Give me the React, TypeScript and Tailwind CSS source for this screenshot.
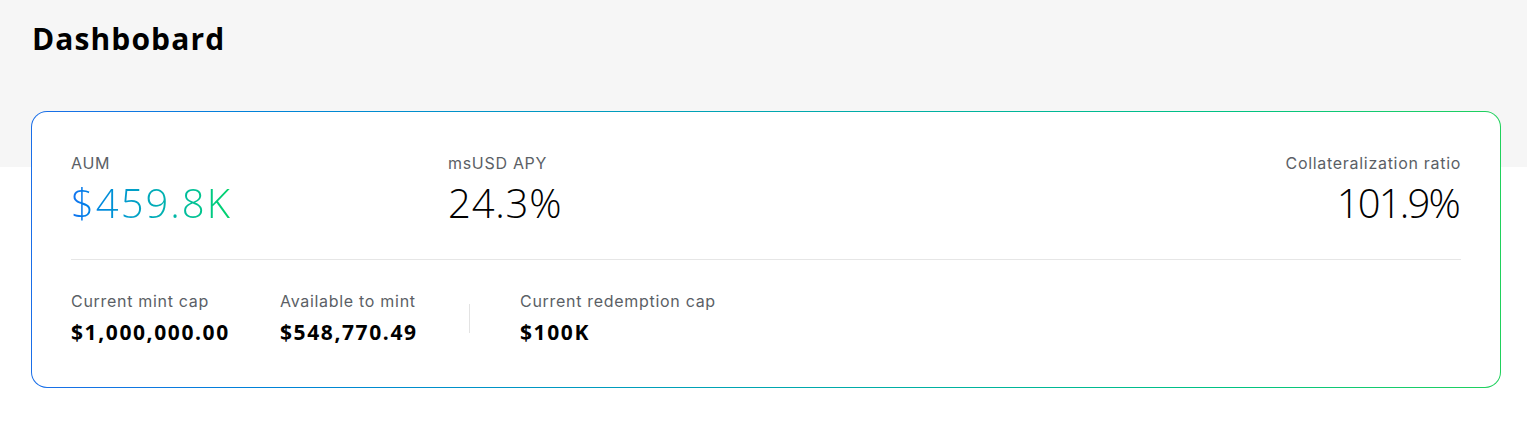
import React from "react";

const num = { fontFamily: '"Open Sans", "Liberation Sans", sans-serif' };
const lab = { fontFamily: 'Inter, "Liberation Sans", sans-serif' };

function Label({ children }: { children: React.ReactNode }) {
  return (
    <div style={lab} className="text-[16px] leading-[20px] tracking-[0.7px] text-[#5b5f66]">
      {children}
    </div>
  );
}

function Small({ children }: { children: React.ReactNode }) {
  return (
    <div style={num} className="mt-[8px] text-[21px] leading-[26px] font-bold tracking-[1.6px] text-black">
      {children}
    </div>
  );
}

export default function App() {
  return (
    <div className="min-h-[432px] w-full bg-[linear-gradient(to_bottom,#f6f6f6_0px,#f6f6f6_167px,#ffffff_167px)]">
      <div className="pl-[32px] pt-[21px] h-[111px]">
        <h1 style={num} className="text-[30px] leading-[36px] font-bold text-black tracking-[1.1px]">
          Dashbobard
        </h1>
      </div>
      <div className="ml-[31px] w-[1470px] rounded-[16px] p-px bg-gradient-to-r from-[#1a6ee8] to-[#20d15c]">
        <div className="rounded-[15px] bg-white px-[39px] pt-[41px] pb-[42px]">
          <div className="flex items-start">
            <div className="w-[377px]">
              <Label>AUM</Label>
              <div
                style={num}
                className="mt-[4px] text-[40px] leading-[52px] font-light tracking-[2px] bg-gradient-to-r from-[#1472f2] to-[#0bd468] bg-clip-text text-transparent w-fit"
              >
                $459.8K
              </div>
            </div>
            <div className="flex-1">
              <Label>msUSD APY</Label>
              <div style={num} className="mt-[4px] text-[40px] leading-[52px] font-light tracking-[0.8px] text-black">
                24.3%
              </div>
            </div>
            <div className="text-right">
              <Label>Collateralization ratio</Label>
              <div style={num} className="mt-[4px] mr-[2px] text-[40px] leading-[52px] font-light tracking-[-1.8px] text-black">
                101.9%
              </div>
            </div>
          </div>
          <div className="mt-[30px] h-px bg-[#e6e6e6]" />
          <div className="mt-[31px] flex items-center">
            <div className="w-[209px]">
              <Label>Current mint cap</Label>
              <Small>$1,000,000.00</Small>
            </div>
            <div className="w-[189px]">
              <Label>Available to mint</Label>
              <Small>$548,770.49</Small>
            </div>
            <div className="w-px h-[29px] bg-[#e3e3e3]" />
            <div className="ml-[50px]">
              <Label>Current redemption cap</Label>
              <Small>$100K</Small>
            </div>
          </div>
        </div>
      </div>
    </div>
  );
}
